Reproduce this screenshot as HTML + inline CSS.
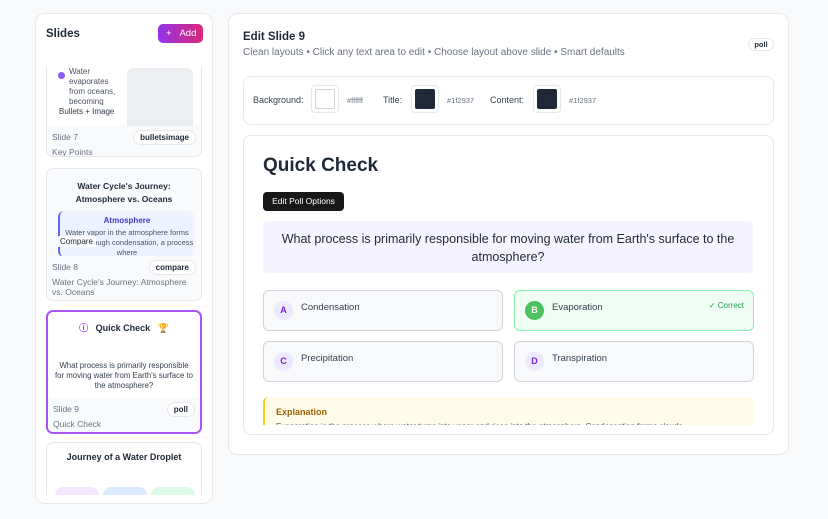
<!DOCTYPE html>
<html><head><meta charset="utf-8"><style>
*{box-sizing:border-box;margin:0;padding:0}
body{width:828px;height:519px;background:#f8f9fb;font-family:"Liberation Sans",sans-serif;color:#1f2937;position:relative;overflow:hidden}
.abs{position:absolute}
.panel{background:#fff;border:1px solid #e5e7eb;border-radius:10px}
.card{position:absolute;left:46px;width:156px;border:1px solid #e5e7eb;border-radius:7px;background:#fafafa;overflow:hidden}
.foot{position:absolute;left:0;right:0;bottom:0;background:#f9fafb;padding:6px 5px;font-size:8.5px;color:#6b7280}
.pill{position:absolute;right:5px;top:4px;background:#fff;border:1px solid #e5e7eb;border-radius:8px;padding:2px 6px;font-size:8px;font-weight:bold;color:#1f2937}
.opt{position:absolute;width:240px;height:41px;border:1.5px solid #d1d5db;border-radius:6px;background:#f8f9fb;font-size:9.5px;color:#374151}
.let{position:absolute;left:10px;top:10px;width:19px;height:19px;border-radius:50%;background:#ede9fe;color:#7e22ce;font-size:9px;font-weight:bold;text-align:center;line-height:19px}
.ot{position:absolute;left:37px;top:11px}
.sw{position:absolute;top:85px;width:28px;height:28px;border:1px solid #e5e7eb;border-radius:4px;padding:3px;background:#fff}
.sw div{width:100%;height:100%;border-radius:2px}
.lab{position:absolute;top:95px;font-size:9px;color:#374151}
.hex{position:absolute;top:96px;font-size:7.5px;color:#6b7280}
</style></head><body>
<div class="abs panel" style="left:35px;top:13px;width:178px;height:491px"></div>
<div class="abs" style="left:46px;top:28px;font-size:11.5px;font-weight:bold">Slides</div>
<div class="abs" style="left:158px;top:24px;width:45px;height:19px;border-radius:5px;background:linear-gradient(90deg,#9333ea,#db2777);color:#fff;font-size:9.5px;line-height:19px;padding-left:8px">+&nbsp;&nbsp;&nbsp;Add</div>
<div class="abs" style="left:36px;top:67px;width:176px;height:428px;overflow:hidden">
 <div class="card" style="left:10px;top:-20px;height:110px;background:#fff">
  <div class="abs" style="left:11px;top:24px;width:7px;height:7px;border-radius:50%;background:#8b5cf6"></div>
  <div class="abs" style="left:22px;top:19px;font-size:8px;line-height:10px;color:#4b5563;width:55px">Water evaporates from oceans, becoming vapor in the</div>
  <div class="abs" style="left:80px;top:20px;width:66px;height:70px;background:#eceef1;border-radius:6px"></div>
  <div class="abs" style="left:8px;top:57px;font-size:8px;background:rgba(255,255,255,.9);padding:2px 4px;color:#374151">Bullets + Image</div>
  <div class="foot" style="height:30px">Slide 7<br><span style="display:block;margin-top:5px">Key Points</span><span class="pill">bulletsimage</span></div>
 </div>
 <div class="card" style="left:10px;top:101px;height:133px;background:#f9fafb">
  <div class="abs" style="left:0;right:0;top:11px;text-align:center;font-size:8.5px;font-weight:bold;line-height:13px">Water Cycle's Journey:<br>Atmosphere vs. Oceans</div>
  <div class="abs" style="left:11px;top:42px;width:136px;height:46px;background:#eef2ff;border-left:2px solid #6366f1;border-radius:6px;overflow:hidden">
   <div style="text-align:center;font-size:8px;color:#4338ca;font-weight:bold;margin-top:5px">Atmosphere</div>
   <div style="text-align:center;font-size:7.5px;color:#4b5563;line-height:10px;margin-top:3px">Water vapor in the atmosphere forms clouds through condensation, a process where</div>
  </div>
  <div class="abs" style="left:10px;top:67px;font-size:8px;background:rgba(255,255,255,.9);padding:1px 3px">Compare</div>
  <div class="foot" style="height:44px;background:#f9fafb">Slide 8<br><span style="display:block;margin-top:5px;line-height:10px">Water Cycle's Journey: Atmosphere vs. Oceans</span><span class="pill">compare</span></div>
 </div>
 <div class="card" style="left:10px;top:243px;height:124px;border:2px solid #a855f7;background:#fff">
  <div class="abs" style="left:0;right:0;top:9px;text-align:center;font-size:9px;font-weight:bold"><span style="color:#9333ea">&#9432;</span>&nbsp;&nbsp; Quick Check &nbsp;&nbsp;<span style="color:#eab308">🏆</span></div>
  <div class="abs" style="left:6px;right:6px;top:49px;text-align:center;font-size:7.8px;line-height:10px;color:#374151">What process is primarily responsible for moving water from Earth's surface to the atmosphere?</div>
  <div class="foot" style="height:34px">Slide 9<br><span style="display:block;margin-top:5px">Quick Check</span><span class="pill">poll</span></div>
 </div>
 <div class="card" style="left:10px;top:375px;height:80px;background:#fff">
  <div class="abs" style="left:0;right:0;top:9px;text-align:center;font-size:9px;font-weight:bold">Journey of a Water Droplet</div>
  <div class="abs" style="left:8px;top:44px;width:44px;height:20px;border-radius:8px;background:#f3e8ff"></div>
  <div class="abs" style="left:56px;top:44px;width:44px;height:20px;border-radius:8px;background:#dbeafe"></div>
  <div class="abs" style="left:104px;top:44px;width:44px;height:20px;border-radius:8px;background:#dcfce7"></div>
 </div>
</div>

<div class="abs panel" style="left:228px;top:13px;width:561px;height:442px"></div>
<div class="abs" style="left:243px;top:31px;font-size:11.5px;font-weight:bold">Edit Slide 9</div>
<div class="abs" style="left:243px;top:47px;font-size:10px;color:#6b7280">Clean layouts • Click any text area to edit • Choose layout above slide • Smart defaults</div>
<div class="abs" style="left:748px;top:38px;width:26px;height:13px;border:1px solid #e5e7eb;border-radius:7px;font-size:7.5px;font-weight:bold;text-align:center;line-height:11px">poll</div>
<div class="abs panel" style="left:243px;top:76px;width:531px;height:49px;border-radius:8px"></div>
<div class="lab" style="left:253px">Background:</div>
<div class="sw" style="left:311px"><div style="border:1px solid #d1d5db"></div></div>
<div class="hex" style="left:347px">#ffffff</div>
<div class="lab" style="left:383px">Title:</div>
<div class="sw" style="left:411px"><div style="background:#1f2937"></div></div>
<div class="hex" style="left:447px">#1f2937</div>
<div class="lab" style="left:490px">Content:</div>
<div class="sw" style="left:533px"><div style="background:#1f2937"></div></div>
<div class="hex" style="left:569px">#1f2937</div>
<div class="abs panel" style="left:243px;top:135px;width:531px;height:300px;border-radius:8px"></div>
<div class="abs" style="left:263px;top:155px;font-size:19px;font-weight:bold">Quick Check</div>
<div class="abs" style="left:263px;top:192px;width:81px;height:19px;background:#18181b;border-radius:4px;color:#fff;font-size:8.5px;text-align:center;line-height:19px">Edit Poll Options</div>
<div class="abs" style="left:263px;top:221px;width:490px;height:52px;background:#f5f3ff;border-radius:5px;text-align:center;font-size:12.5px;line-height:18px;padding-top:9px;color:#1f2937">What process is primarily responsible for moving water from Earth's surface to the<br>atmosphere?</div>
<div class="opt" style="left:263px;top:290px"><div class="let">A</div><div class="ot">Condensation</div></div>
<div class="opt" style="left:514px;top:290px;border-color:#86efac;background:#f0fdf4"><div class="let" style="background:#4cc15f;color:#fff">B</div><div class="ot">Evaporation</div><div class="abs" style="right:9px;top:10px;font-size:8px;color:#22a052">✓ Correct</div></div>
<div class="opt" style="left:263px;top:341px"><div class="let">C</div><div class="ot">Precipitation</div></div>
<div class="opt" style="left:514px;top:341px"><div class="let">D</div><div class="ot">Transpiration</div></div>
<div class="abs" style="left:263px;top:397px;width:490px;height:28px;background:#fefce8;border-left:2px solid #facc15;border-radius:5px 5px 0 0;overflow:hidden">
 <div style="margin:10px 0 0 11px;font-size:9px;font-weight:bold;color:#a16207">Explanation</div>
 <div style="margin:5px 0 0 11px;font-size:8px;color:#4b5563;white-space:nowrap">Evaporation is the process where water turns into vapor and rises into the atmosphere. Condensation forms clouds</div>
</div>
</body></html>
